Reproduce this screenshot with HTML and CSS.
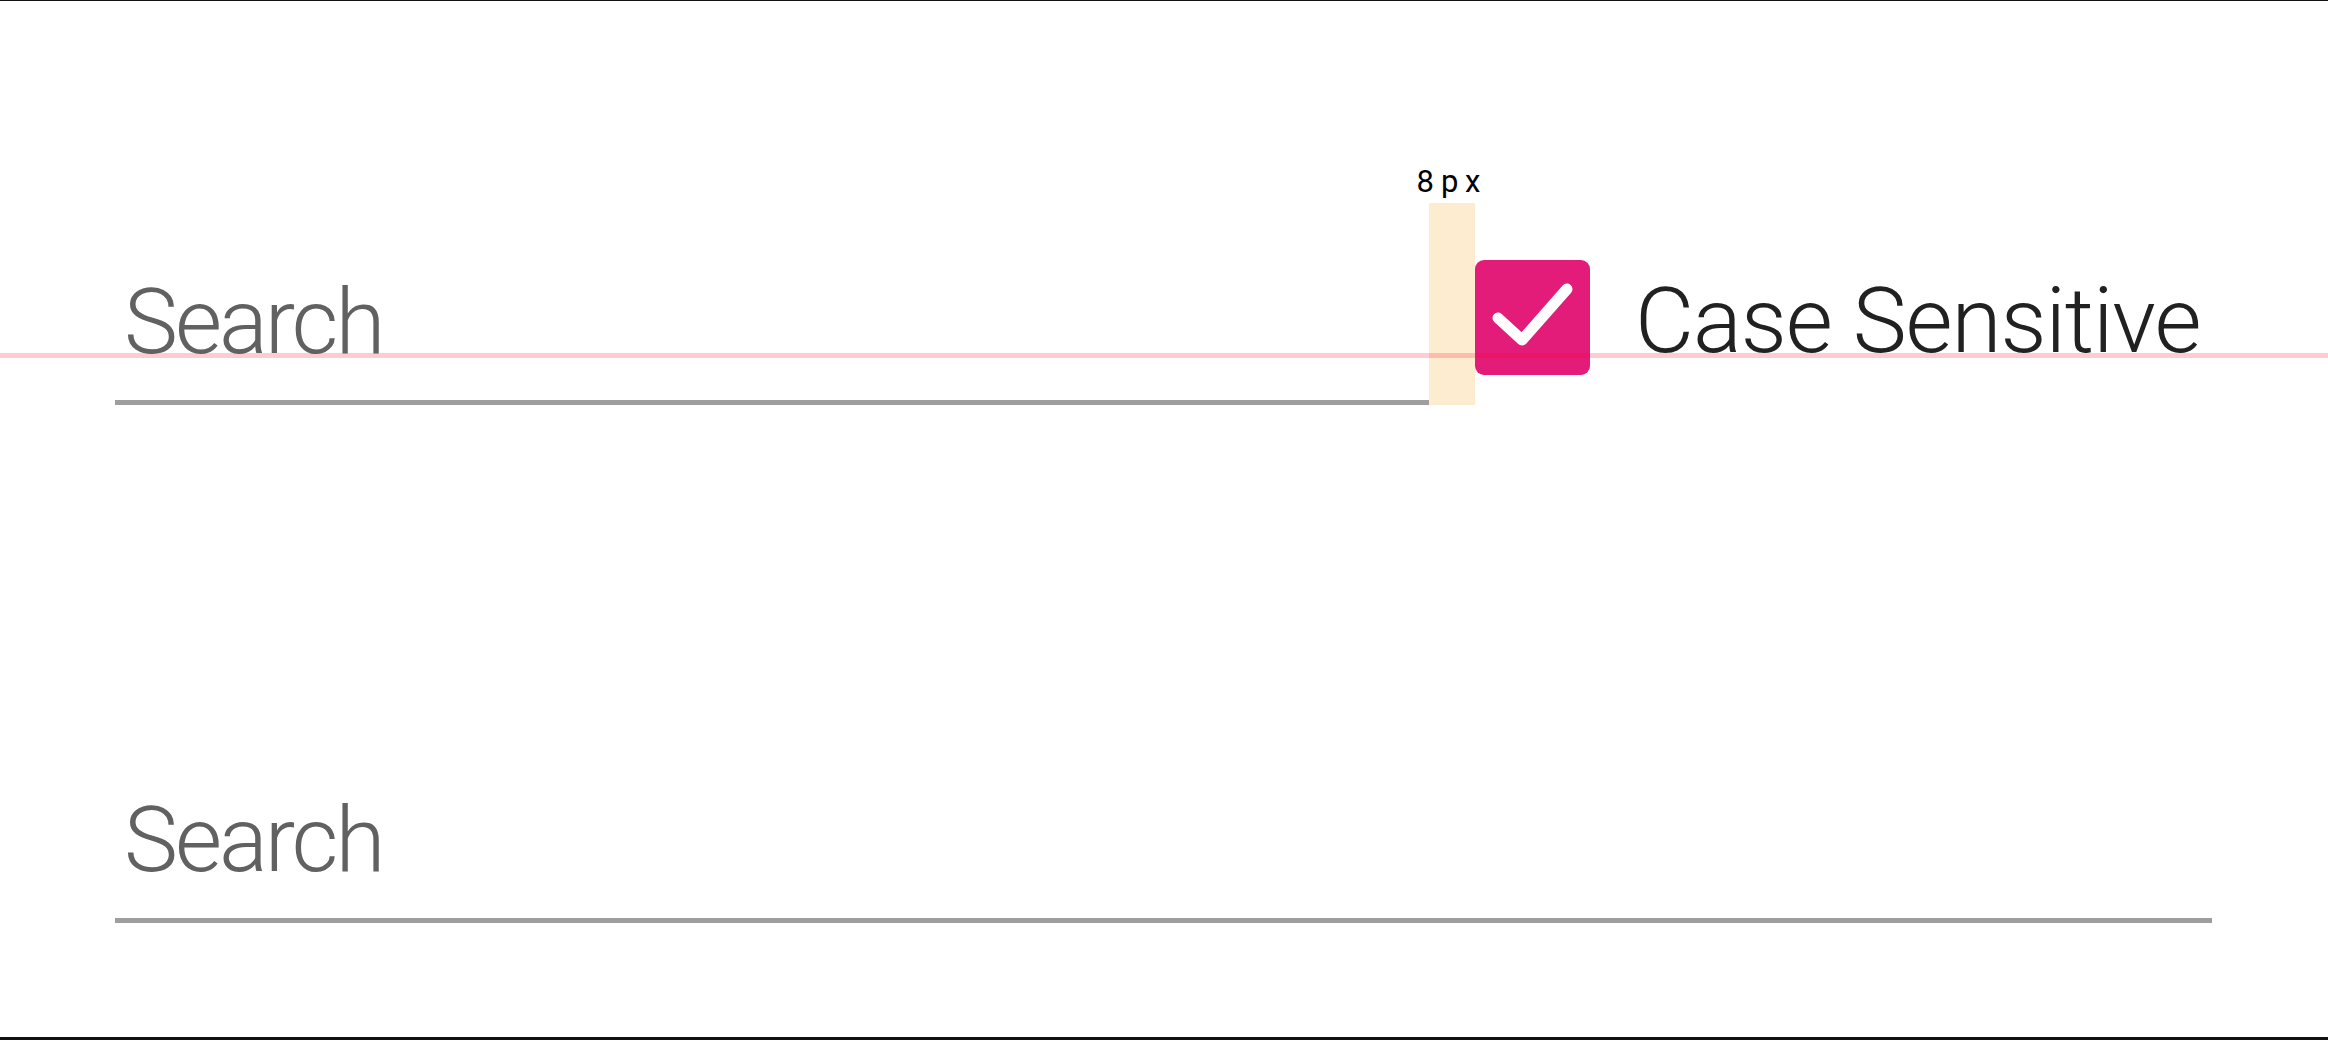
FILE: index.html
```html
<!DOCTYPE html>
<html lang="en">
<head>
<meta charset="utf-8">
<title>Search field with checkbox</title>
<link rel="stylesheet" href="styles.css">
</head>
<body>
<div class="frame">
  <div class="baseline-guide"></div>
  <div class="row">
    <div class="field field-short">
      <span class="field-text">Search</span>
      <span class="field-bar"></span>
    </div>
    <div class="spacer">
      <span class="spacer-label">8px</span>
    </div>
    <div class="checkbox">
      <svg viewBox="0 0 115 115" width="115" height="115" aria-hidden="true">
        <polyline points="23,58 47,80 92,29" fill="none" stroke="#ffffff" stroke-width="11" stroke-linecap="round" stroke-linejoin="round"/>
      </svg>
    </div>
    <span class="check-label">Case Sensitive</span>
  </div>
  <div class="row row-second">
    <div class="field field-long">
      <span class="field-text">Search</span>
      <span class="field-bar"></span>
    </div>
  </div>
</div>
</body>
</html>
```
FILE: styles.css
```css
* {
  box-sizing: border-box;
}

html, body {
  margin: 0;
  padding: 0;
  background: #ffffff;
}

.frame {
  position: relative;
  width: 2328px;
  height: 1040px;
  border-top: 1px solid #111111;
  border-bottom: 3px solid #111111;
  padding: 202px 0 0 115px;
  font-family: Roboto, "Liberation Sans", sans-serif;
  overflow: hidden;
}

.baseline-guide {
  position: absolute;
  left: 0;
  right: 0;
  top: 352px;
  height: 5px;
  background: rgba(255, 0, 24, 0.2);
  z-index: 5;
}

.row {
  display: flex;
  align-items: flex-start;
  height: 202px;
}

.row-second {
  margin-top: 316px;
}

.field {
  display: flex;
  flex-direction: column;
  justify-content: flex-end;
  height: 202px;
}

.field-short {
  width: 1314px;
}

.field-long {
  width: 2097px;
}

.field-text {
  display: block;
  padding-left: 9px;
  font-size: 91px;
  line-height: 91px;
  font-weight: 350;
  letter-spacing: -3px;
  color: #616161;
  margin-bottom: 32px;
}

.field-bar {
  display: block;
  height: 5px;
  background: #9e9e9e;
}

.spacer {
  position: relative;
  align-self: stretch;
  width: 46px;
  background: #feecd0;
}

.spacer-label {
  position: absolute;
  left: 50%;
  bottom: calc(100% + 6px);
  transform: translateX(-50%);
  font-size: 31px;
  line-height: 31px;
  letter-spacing: 7px;
  color: #000000;
  white-space: nowrap;
}

.checkbox {
  width: 115px;
  height: 115px;
  margin-top: 57px;
  border-radius: 9px;
  background: #e31c79;
}

.checkbox svg {
  display: block;
}

.check-label {
  margin-top: 73px;
  margin-left: 45px;
  font-size: 91px;
  line-height: 91px;
  font-weight: 350;
  letter-spacing: -1.1px;
  color: #212121;
  white-space: nowrap;
}
```
